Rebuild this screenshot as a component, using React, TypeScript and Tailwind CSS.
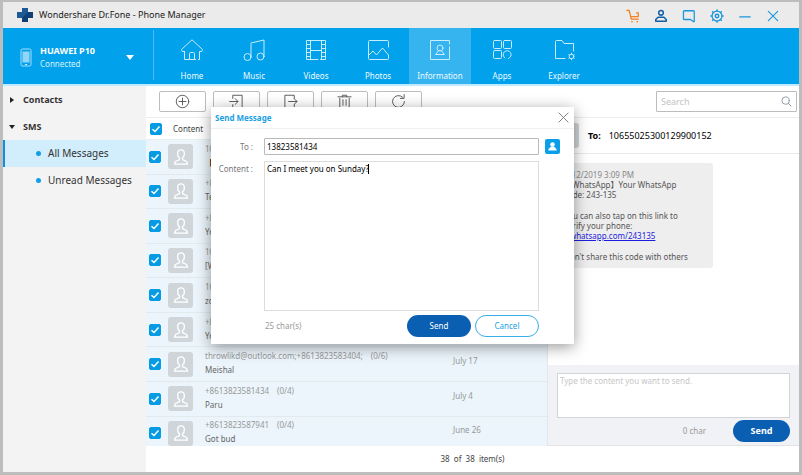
import type { ReactNode } from "react";
import clsx from "clsx";

// ── Data ──────────────────────────────────────────────────────────────────────

type Thread = {
  from: string;
  count?: string;
  text: string;
  date: string;
  strong?: boolean;
};

const THREADS: Thread[] = [
  { from: "10655", text: "【", date: "July 28", strong: true },
  { from: "+8613823581434", text: "Test", date: "July 26" },
  { from: "+8613823587941", text: "You", date: "July 25" },
  { from: "10655025300129900152", text: "[WhatsApp]", date: "July 22" },
  { from: "10655025300129900152", text: "zone", date: "July 20" },
  { from: "+8613823583404", text: "You", date: "July 18" },
  { from: "throwlikd@outlook.com;+8613823583404;", count: "(0/6)", text: "Meishal", date: "July 17" },
  { from: "+8613823581434", count: "(0/4)", text: "Paru", date: "July 4" },
  { from: "+8613823587941", count: "(0/4)", text: "Got bud", date: "June 26" },
];

// ── Icons ─────────────────────────────────────────────────────────────────────

function Icon({ size = 24, className, children }: { size?: number; className?: string; children: ReactNode }) {
  return (
    <svg
      width={size}
      height={size}
      viewBox="0 0 24 24"
      fill="none"
      stroke="currentColor"
      strokeWidth="1"
      strokeLinecap="round"
      strokeLinejoin="round"
      className={clsx("shrink-0", className)}
      aria-hidden="true"
    >
      {children}
    </svg>
  );
}

const NAV: { label: string; icon: ReactNode }[] = [
  {
    label: "Home",
    icon: <path d="M4.500 13.500v8h11M4.500 13.500H2.300L1.500 11.500 12 1.800l10.500 9.700-.8 2h-2.200v8h-1M9.500 21.500v-6q0-1 1-1h3q1 0 1 1v6" />,
  },
  {
    label: "Music",
    icon: (
      <>
        <circle cx="5.500" cy="19" r="3.500" />
        <circle cx="18.500" cy="18.500" r="3.500" />
        <path d="M9 19V6M9 5l13-3v16.500" />
      </>
    ),
  },
  {
    label: "Videos",
    icon: (
      <path d="M14 21.500H2.500v-19h19v19h-5M6.500 2.500v19M17.500 2.500v19M6.500 12.500h11M2.500 6.500h4M2.500 10.500h4M2.500 14.500h4M2.500 18.500h4M17.500 6.500h4M17.500 10.500h4M17.500 14.500h4M17.500 18.500h4" />
    ),
  },
  {
    label: "Photos",
    icon: <path d="M22.500 9V3.500q0-1-1-1h-18q-1 0-1 1v17q0 1 1 1h18q1 0 1-1v-3.500L16.500 10l-6 7-3.500-4-4.500 4.500" />,
  },
  {
    label: "Information",
    icon: (
      <>
        <path d="M21.500 6V2.500h-19v19h19V9" />
        <circle cx="12" cy="10" r="3" />
        <path d="M10.500 13 7.500 16.500h9L13.500 13" />
      </>
    ),
  },
  {
    label: "Apps",
    icon: (
      <>
        <rect x="3.500" y="2.500" width="8" height="8" rx="1" />
        <rect x="13.500" y="2.500" width="8" height="8" rx="1" />
        <rect x="3.500" y="12.500" width="8" height="8" rx="1" />
        <path d="M14.800 20A4 4 0 1 1 18.500 20.500" />
      </>
    ),
  },
  {
    label: "Explorer",
    icon: (
      <>
        <path d="M13 20.500H3.500v-17q0-1 1-1H10l2 3h9.500V13" />
        <circle cx="19.500" cy="18.500" r="2.300" />
        <path d="M19.500 15.200v1M19.500 20.800v1M16.700 16.800l.8.500M21.500 19.700l.8.500M22.300 16.800l-.8.500M17.500 19.700l-.8.500" />
      </>
    ),
  },
];

const TOOLS: { label: string; icon: ReactNode }[] = [
  {
    label: "New message",
    icon: (
      <>
        <circle cx="12" cy="12" r="10" />
        <path d="M12 6.500v11M6.500 12h11" />
      </>
    ),
  },
  { label: "Import", icon: <path d="M6 7V2h15v20H6v-5M1 12h13M10 7.500l4.500 4.500-4.500 4.500" /> },
  { label: "Export", icon: <path d="M18 7V2H3v20h15v-5M9 12h13M18 7.500l4.500 4.500-4.500 4.500" /> },
  { label: "Delete", icon: <path d="M1.500 4.500h21M8.500 4.500V2h7v2.500M4.500 7v15h15V7M9.500 9v9M14.500 9v9" /> },
  { label: "Refresh", icon: <path d="M21.500 12a9.500 9.500 0 1 1-3-7M21 1v6h-6" /> },
];

function UserGlyph() {
  return (
    <span className="flex size-[25px] shrink-0 items-center justify-center rounded-[3px] bg-[#d0d5d9] text-white">
      <Icon size={18}>
        <path
          strokeWidth="1.800"
          d="M12 2.500c-3 0-4.500 2.300-4.500 5 0 2.200 1 4.500 2.500 5.500v2.500L4.500 18l-1.200 3.500h17.400L19.500 18 14 15.500V13c1.500-1 2.500-3.300 2.500-5.500 0-2.700-1.500-5-4.500-5z"
        />
      </Icon>
    </span>
  );
}

function Check({ label }: { label: string }) {
  return (
    <span className="relative flex size-3 shrink-0">
      <input
        type="checkbox"
        defaultChecked
        aria-label={label}
        className="peer size-3 appearance-none rounded-[2px] border border-[#a5a5a5] checked:border-[#069be3] checked:bg-[#069be3]"
      />
      <svg
        viewBox="0 0 12 12"
        className="pointer-events-none absolute inset-0 hidden size-3 peer-checked:block"
        fill="none"
        stroke="white"
        strokeWidth="1.500"
      >
        <path d="M2.500 6.200 5 8.500l4.500-5" />
      </svg>
    </span>
  );
}

// ── Window chrome ─────────────────────────────────────────────────────────────

function TitleBar() {
  return (
    <header className="flex h-[26px] shrink-0 items-center bg-[#ebebeb] pr-[19px] pl-[14px]">
      <svg width="16" height="14" viewBox="0 0 16 14" className="shrink-0" aria-hidden="true">
        <path d="M5 0h6v4h5v6h-5v4H5v-4H0V4h5z" fill="#0f3f74" />
        <path d="M5 0h6v4l-6 6H0V4h5z" fill="#1c5a96" />
      </svg>
      <h1 className="ml-[6px] text-[9px] leading-3 text-[#222]">Wondershare Dr.Fone - Phone Manager</h1>
      <div className="ml-auto flex items-center gap-[14px] pt-[2px] text-[#1b96dc]">
        <button aria-label="Store" className="text-[#f5801f]">
          <Icon size={14}>
            <path strokeWidth="2.200" d="M1.500 2.500h4l3.500 15h12M10 13h11V6.500h-3" />
            <path strokeWidth="2.500" d="M10 22h.5M19 22h.5" />
          </Icon>
        </button>
        <button aria-label="Account" className="text-[#155fa5]">
          <Icon size={14}>
            <circle cx="12" cy="6.500" r="4" strokeWidth="2.600" />
            <path strokeWidth="2.600" d="M7 14h10l4 4v3H3v-3z" />
          </Icon>
        </button>
        <button aria-label="Feedback">
          <Icon size={14}>
            <path strokeWidth="2.200" d="M20 22 14.500 18H4q-1.500 0-1.500-1.500v-12Q2.500 3 4 3h15.500Q21 3 21 4.500v17z" />
          </Icon>
        </button>
        <button aria-label="Settings">
          <Icon size={14}>
            <circle cx="12" cy="12" r="8.500" strokeWidth="2" />
            <circle cx="12" cy="12" r="3" strokeWidth="2.500" />
            <path
              strokeWidth="2.500"
              d="M12 1.500v2M12 20.500v2M1.500 12h2M20.500 12h2M4.600 4.600 6 6M18 18l1.400 1.400M19.400 4.600 18 6M6 18l-1.400 1.400"
            />
          </Icon>
        </button>
        <button aria-label="Minimize">
          <Icon size={14}>
            <path strokeWidth="2" d="M3 13.500h18" />
          </Icon>
        </button>
        <button aria-label="Close">
          <Icon size={14}>
            <path strokeWidth="2" d="m4 4 16 16M20 4 4 20" />
          </Icon>
        </button>
      </div>
    </header>
  );
}

function NavBar() {
  return (
    <nav className="flex h-[58px] shrink-0 border-b-2 border-[#bfe9fc] bg-[#02a1eb] text-white">
      <button className="flex w-[150px] items-center pt-[2px] pl-[17px] text-left">
        <svg width="12" height="19" viewBox="0 0 12 19" className="shrink-0" aria-hidden="true">
          <rect x="1" y="1" width="10" height="17" rx="1.500" fill="none" stroke="#a9e0fa" />
          <rect x="2.500" y="3.500" width="7" height="11" fill="#8fd6f8" />
          <path d="M5 16.500h2" stroke="#d4f1fe" />
        </svg>
        <span className="ml-2 flex flex-col">
          <span className="text-[9px] leading-[13px] font-bold">HUAWEI P10</span>
          <span className="text-[8px] leading-[13px] text-[#d6f1fd]">Connected</span>
        </span>
        <svg width="8" height="5" viewBox="0 0 8 5" className="mr-[19px] ml-auto" aria-hidden="true">
          <path d="M0 0h8L4 5z" fill="white" />
        </svg>
      </button>
      <span className="mt-[2px] mr-[7px] h-[50px] w-px bg-[#4fbdf1]" />
      {NAV.map((item) => (
        <button
          key={item.label}
          aria-current={item.label === "Information" ? "page" : undefined}
          className={clsx(
            "flex w-[62px] flex-col items-center pt-[10px]",
            item.label === "Information" && "bg-[#35b4f0]",
          )}
        >
          <Icon className="text-[#c9edfd]">{item.icon}</Icon>
          <span className="mt-2 text-[8px] leading-3 text-[#eefaff]">{item.label}</span>
        </button>
      ))}
    </nav>
  );
}

function Sidebar() {
  return (
    <aside className="w-[143px] shrink-0 bg-[#f3f3f3] text-[#333]">
      <button className="flex h-[27px] w-full items-center gap-2 pl-[6px] text-[9px] font-bold">
        <svg width="6" height="6" viewBox="0 0 6 6" aria-hidden="true">
          <path d="M1 0v6l4-3z" fill="#222" />
        </svg>
        Contacts
      </button>
      <button className="flex h-[27px] w-full items-center gap-2 pl-[6px] text-[9px] font-bold">
        <svg width="6" height="6" viewBox="0 0 6 6" aria-hidden="true">
          <path d="M0 1h6L3 5z" fill="#222" />
        </svg>
        SMS
      </button>
      {["All Messages", "Unread Messages"].map((label, i) => (
        <button
          key={label}
          className={clsx(
            "flex h-[27px] w-full items-center gap-[7px] border-l-2 pl-[31px] text-[10px]",
            i === 0 ? "border-[#0f8fdb] bg-[#d2eefd]" : "border-transparent",
          )}
        >
          <span className="size-[5px] rounded-full bg-[#129ee6]" />
          {label}
        </button>
      ))}
    </aside>
  );
}

// ── Messages ──────────────────────────────────────────────────────────────────

function Toolbar() {
  return (
    <div className="flex h-8 shrink-0 items-center gap-[7px] border-b border-[#ededed] pr-[2px] pl-[13px]">
      {TOOLS.map((tool) => (
        <button
          key={tool.label}
          aria-label={tool.label}
          className="flex h-[21px] w-[47px] items-center justify-center rounded-[2px] border border-[#bdbdbd] text-[#555]"
        >
          <Icon size={15} className="[stroke-width:1.500]">
            {tool.icon}
          </Icon>
        </button>
      ))}
      <label className="ml-auto flex h-[21px] w-[141px] items-center rounded-[1px] border border-[#bcbcbc] px-1">
        <input
          type="search"
          aria-label="Search"
          placeholder="Search"
          className="min-w-0 flex-1 text-[9px] outline-none placeholder:text-[#c3c3c3]"
        />
        <Icon size={11} className="text-[#8b95a0]">
          <circle cx="10" cy="10" r="8" strokeWidth="2" />
          <path strokeWidth="2" d="m16 16 6 6" />
        </Icon>
      </label>
    </div>
  );
}

function ThreadRow({ thread }: { thread: Thread }) {
  return (
    <li className="flex min-h-0 flex-1 items-center border-b border-[#e2eaee] pl-[3px]">
      <Check label={thread.from} />
      <span className="ml-[7px] flex">
        <UserGlyph />
      </span>
      <div className="ml-3 flex w-[248px] shrink-0 flex-col pb-[2px] whitespace-nowrap">
        <span className="text-[8px] leading-[14px] text-[#999]">
          {thread.from}
          {thread.count && <span className="ml-2">{thread.count}</span>}
        </span>
        <span className={clsx("text-[8px] leading-[14px] text-[#666]", thread.strong && "font-bold text-black")}>
          {thread.text}
        </span>
      </div>
      <time className="pb-[6px] text-[8px] text-[#999]">{thread.date}</time>
    </li>
  );
}

function ThreadList() {
  return (
    <section className="flex min-h-0 flex-col overflow-hidden border-r border-[#e3e7ea]">
      <div className="flex h-[22px] shrink-0 items-center border-b border-[#e6eef2] pl-1 text-[8px] text-[#444]">
        <Check label="Select all" />
        <span className="ml-[11px]">Content</span>
      </div>
      <ul className="-mb-[5px] flex min-h-0 flex-1 flex-col bg-[#ebf5fb]">
        {THREADS.map((thread, i) => (
          <ThreadRow key={i} thread={thread} />
        ))}
      </ul>
    </section>
  );
}

function Conversation() {
  return (
    <section className="flex min-h-0 flex-col">
      <div className="flex h-9 shrink-0 items-center border-b border-[#e8e8e8] pl-[6px] text-black">
        <UserGlyph />
        <span className="ml-[9px] text-[9px] font-bold">To:</span>
        <span className="ml-2 text-[9px]">10655025300129900152</span>
      </div>
      <div className="min-h-0 flex-1 pt-[9px] pl-[10px]">
        <div className="flex w-[155px] flex-col gap-[11px] rounded-[3px] bg-[#eeeeee] py-[6px] pl-[6px] text-[8px] leading-[10px] whitespace-nowrap text-[#555]">
          <p>
            <time className="block leading-[11px] text-[#888]">4/12/2019 3:09 PM</time>
            【WhatsApp】Your WhatsApp
            <br />
            code: 243-135
          </p>
          <p>
            You can also tap on this link to
            <br />
            verify your phone:
            <br />
            <a href="#verify" className="text-[#1d1de0] underline">
              v.whatsapp.com/243135
            </a>
          </p>
          <p>Don't share this code with others</p>
        </div>
      </div>
      <form className="h-[81px] shrink-0 border-b border-[#e3e3e6] bg-[#f1f2f6] px-[9px] pt-2" onSubmit={(e) => e.preventDefault()}>
        <textarea
          aria-label="Message"
          placeholder="Type the content you want to send."
          className="block h-[45px] w-full resize-none border border-[#d4d4d8] bg-white px-[2px] py-[1px] text-[8px] outline-none placeholder:text-[#c6c6c6]"
        />
        <div className="mt-[2px] flex items-center justify-end">
          <span className="mr-[27px] text-[8px] text-[#999]">0 char</span>
          <button className="h-[22px] w-[57px] rounded-full bg-[#0b5fb3] text-[9px] font-bold text-white">Send</button>
        </div>
      </form>
    </section>
  );
}

// ── Compose dialog ────────────────────────────────────────────────────────────

function SendDialog() {
  return (
    <form
      role="dialog"
      aria-labelledby="send-title"
      onSubmit={(e) => e.preventDefault()}
      className="absolute top-[105px] left-[208px] flex h-[237px] w-[363px] flex-col bg-white text-[8px] text-[#777] shadow-[0_3px_14px_rgba(0,0,0,0.4)]"
    >
      <div className="flex h-[22px] shrink-0 items-center justify-between border-b border-[#f0f0f0] pr-[5px] pl-1">
        <h2 id="send-title" className="text-[8px] font-bold text-[#1a9fe3]">
          Send Message
        </h2>
        <button type="button" aria-label="Close dialog" className="text-[#777]">
          <Icon size={11}>
            <path strokeWidth="2" d="m2 2 20 20M22 2 2 22" />
          </Icon>
        </button>
      </div>
      <div className="grid grid-cols-[42px_275px_15px] gap-[6px] pt-[9px] pl-[5px]">
        <label htmlFor="to" className="self-center pr-[5px] text-right">
          To :
        </label>
        <input
          id="to"
          defaultValue="13823581434"
          className="h-[17px] rounded-[1px] border border-[#b9b9b9] px-[2px] text-[8px] text-black outline-none"
        />
        <button
          type="button"
          aria-label="Choose contact"
          className="flex size-[15px] items-center justify-center self-center rounded-[2px] bg-[#0a9fe8]"
        >
          <svg width="9" height="9" viewBox="0 0 9 9" fill="white" aria-hidden="true">
            <circle cx="4.500" cy="2.500" r="2.300" />
            <path d="M3.200 4.500h2.600L8.500 7v1.500h-8V7z" />
          </svg>
        </button>
        <label htmlFor="content" className="pt-[2px] pr-[5px] text-right whitespace-nowrap">
          Content :
        </label>
        <div className="relative">
          <textarea
            id="content"
            defaultValue="Can I meet you on Sunday?"
            className="block h-[150px] w-full resize-none border border-[#dcdcdc] px-[2px] py-[1px] text-[8px] text-black outline-none"
          />
          <span className="absolute top-[3px] left-[104px] h-[10px] w-px bg-black" />
        </div>
      </div>
      <div className="flex items-center gap-1 pt-1 pr-[35px] pl-[54px]">
        <span className="mr-auto text-[#999]">25 char(s)</span>
        <button className="h-[22px] w-16 rounded-full bg-[#0b5fb3] text-white">Send</button>
        <button type="button" className="h-[22px] w-16 rounded-full border border-[#3aaee9] text-[#1a9fe3]">
          Cancel
        </button>
      </div>
    </form>
  );
}

// ── App ───────────────────────────────────────────────────────────────────────

export default function App() {
  return (
    <div className="relative flex h-screen flex-col border-x-[3px] border-t-2 border-b-[3px] border-[#bdbdbd] bg-white font-['Noto_Sans','Noto_Sans_CJK_SC',sans-serif]">
      <TitleBar />
      <NavBar />
      <div className="flex min-h-0 flex-1">
        <Sidebar />
        <main className="flex min-w-0 flex-1 flex-col">
          <Toolbar />
          <div className="grid min-h-0 flex-1 grid-cols-[402fr_251fr] grid-rows-[minmax(0,1fr)]">
            <ThreadList />
            <Conversation />
          </div>
          <footer className="flex h-[26px] shrink-0 items-center justify-center text-[8px] text-[#444]">
            38&nbsp; of &nbsp;38&nbsp; item(s)
          </footer>
        </main>
      </div>
      <SendDialog />
    </div>
  );
}
